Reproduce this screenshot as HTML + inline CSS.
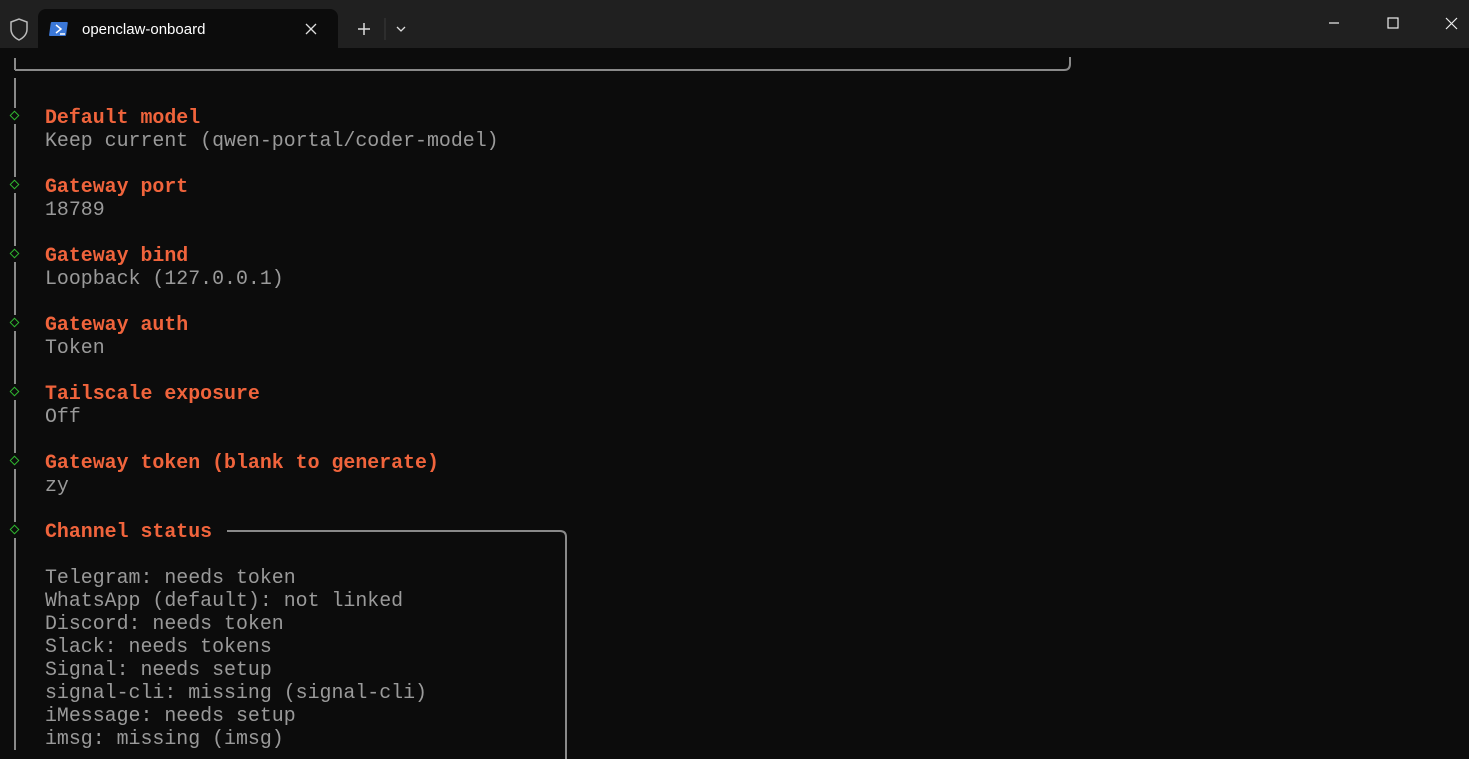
<!DOCTYPE html>
<html><head><style>
body{margin:0;width:1469px;height:759px;background:#0c0c0c;overflow:hidden;position:relative;font-family:"Liberation Mono",monospace}
.tb{position:absolute;left:0;top:0;width:1469px;height:48px;background:#202020}
.tab{position:absolute;left:38px;top:9px;width:300px;height:40px;background:#0c0c0c;border-radius:8px 8px 0 0}
.t{position:absolute;left:45px;font-size:19.9px;line-height:23px;white-space:pre;color:#9a9a9a}
.o{color:#f0643c;font-weight:bold}
.bar{position:absolute;left:14px;width:2px;background:#8a8a8a}
.d{position:absolute;left:11px;width:7px;height:7px;border:1.5px solid #2fb52f;transform:rotate(45deg);box-sizing:border-box}
</style></head><body>
<div class="tb"></div>
<div class="tab"></div>
<svg style="position:absolute;left:0;top:0" width="1469" height="48">
<path d="M11 22 l8 -3 l8 3 v7 c0 6 -4 9 -8 11 c-4 -2 -8 -5 -8 -11z" fill="none" stroke="#bbb" stroke-width="1.5"/>
<rect x="54" y="22" width="17" height="14" rx="1" fill="#3b78d8" transform="skewX(-8)"/>
<path d="M56 25 l5 4 l-5 4" stroke="#fff" stroke-width="1.5" fill="none"/><path d="M60 34 h5" stroke="#fff" stroke-width="1.5"/>
<path d="M306 24 l10 10 M316 24 l-10 10" stroke="#ddd" stroke-width="1.3"/>
<path d="M364 23 v12 M358 29 h12" stroke="#ddd" stroke-width="1.5"/>
<path d="M385 18 v22" stroke="#3a3a3a"/>
<path d="M397 27 l4 4 l4 -4" stroke="#ddd" stroke-width="1.3" fill="none"/>
<path d="M1329 23 h10" stroke="#eee" stroke-width="1.2"/>
<rect x="1388" y="18" width="10" height="10" fill="none" stroke="#eee" stroke-width="1.2"/>
<path d="M1446 18 l11 11 M1457 18 l-11 11" stroke="#eee" stroke-width="1.2"/>
</svg>
<div style="position:absolute;left:82px;top:21px;font-family:'Liberation Sans',sans-serif;font-size:15px;color:#fff">openclaw-onboard</div>
<svg style="position:absolute;left:0;top:48px" width="1469" height="711">
<path d="M15 10 v12 M15 22 H1064 q6 0 6 -6 v-7" fill="none" stroke="#8a8a8a" stroke-width="2"/>
<path d="M227 483 H560 q6 0 6 6 V711" fill="none" stroke="#8a8a8a" stroke-width="2"/>
</svg>
<div class="bar" style="top:78px;height:30px"></div>
<div class="bar" style="top:124px;height:53px"></div>
<div class="bar" style="top:193px;height:53px"></div>
<div class="bar" style="top:262px;height:53px"></div>
<div class="bar" style="top:331px;height:53px"></div>
<div class="bar" style="top:400px;height:53px"></div>
<div class="bar" style="top:469px;height:53px"></div>
<div class="bar" style="top:538px;height:212px"></div>
<div class="d" style="top:112px"></div><div class="d" style="top:181px"></div><div class="d" style="top:250px"></div><div class="d" style="top:319px"></div><div class="d" style="top:388px"></div><div class="d" style="top:457px"></div><div class="d" style="top:526px"></div>
<div class="t" style="top:106px"><span class="o">Default model</span>
Keep current (qwen-portal/coder-model)</div>
<div class="t" style="top:175px"><span class="o">Gateway port</span>
18789</div>
<div class="t" style="top:244px"><span class="o">Gateway bind</span>
Loopback (127.0.0.1)</div>
<div class="t" style="top:313px"><span class="o">Gateway auth</span>
Token</div>
<div class="t" style="top:382px"><span class="o">Tailscale exposure</span>
Off</div>
<div class="t" style="top:451px"><span class="o">Gateway token (blank to generate)</span>
zy</div>
<div class="t" style="top:520px"><span class="o">Channel status</span>

Telegram: needs token
WhatsApp (default): not linked
Discord: needs token
Slack: needs tokens
Signal: needs setup
signal-cli: missing (signal-cli)
iMessage: needs setup
imsg: missing (imsg)</div>
</body></html>
